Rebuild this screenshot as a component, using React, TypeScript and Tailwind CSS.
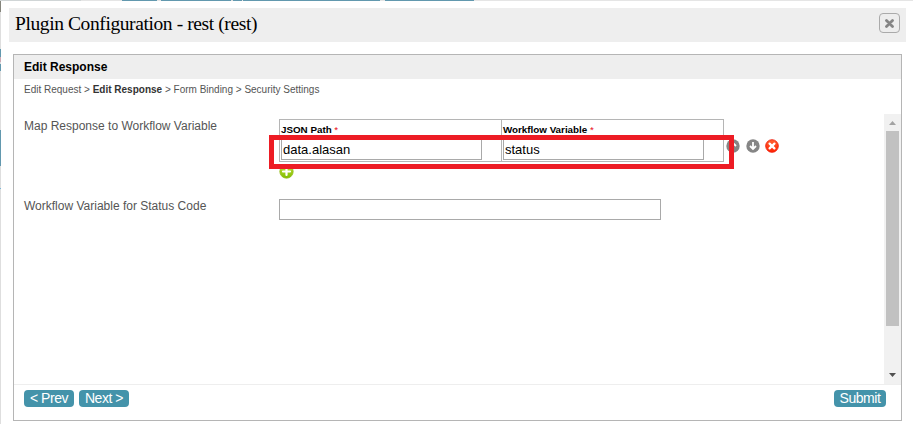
import React from "react";

const inputClass =
  "block h-[21px] border border-[#a9a9a9] bg-white px-px text-[13px] leading-[19px] text-black outline-none";

function GreyArrow({ up = false }: { up?: boolean }) {
  return (
    <svg width="14" height="14" viewBox="0 0 14 14" className="block">
      <circle cx="7" cy="7" r="6.7" fill="#858585" />
      <path
        d="M7 3v7M4 7l3 3 3-3"
        fill="none"
        stroke="#fff"
        strokeWidth="1.8"
        transform={up ? "rotate(180 7 7)" : undefined}
      />
    </svg>
  );
}

function DeleteIcon() {
  return (
    <svg width="14" height="14" viewBox="0 0 14 14" className="-ml-px block">
      <defs>
        <linearGradient id="del" x1="0" y1="0" x2="0" y2="1">
          <stop offset="0" stopColor="#ff6533" />
          <stop offset="1" stopColor="#ff2100" />
        </linearGradient>
      </defs>
      <circle cx="7" cy="7" r="6.3" fill="url(#del)" stroke="#ee2010" strokeWidth="0.9" />
      <path d="M4.6 4.6l4.8 4.8M9.4 4.6L4.6 9.4" stroke="#fff" strokeWidth="2.3" strokeLinecap="round" />
    </svg>
  );
}

function AddIcon() {
  return (
    <svg width="15" height="15" viewBox="0 0 15 15" className="block">
      <defs>
        <linearGradient id="add" x1="0" y1="0" x2="0" y2="1">
          <stop offset="0" stopColor="#c3e33a" />
          <stop offset="1" stopColor="#80bd00" />
        </linearGradient>
      </defs>
      <circle cx="7.5" cy="7.5" r="6.7" fill="url(#add)" stroke="#95bd20" strokeWidth="0.8" />
      <path d="M7.5 4v7M4 7.5h7" stroke="#fff" strokeWidth="2.2" strokeLinecap="round" />
    </svg>
  );
}

function TopStrip() {
  return (
    <div className="flex h-px bg-[#e5e5e5]">
      <div className="w-[81px] bg-[#d0d5d6]" />
      <div className="ml-[41px] w-[35px] bg-[#6298ae]" />
      <div className="ml-1 w-[70px] bg-[#6298ae]" />
      <div className="w-[9px] bg-[#dedede]" />
      <div className="-ml-[9px] w-[9px] translate-x-[2px] bg-[#6298ae]" />
      <div className="ml-[3px] w-[137px] bg-[#6298ae]" />
      <div className="ml-[5px] w-[89px] bg-[#6298ae]" />
    </div>
  );
}

function LeftStrip() {
  return (
    <div className="flex w-px shrink-0 flex-col bg-[#dedede]">
      <div className="h-[11px] bg-[#85857c]" />
      <div className="mt-[37px] h-2 bg-[#6298ae]" />
      <div className="h-[5px] bg-[#cda9b4]" />
      <div className="mt-[2px] h-[7px] bg-[#6298ae]" />
      <div className="mt-[59px] h-9 bg-[#6298ae]" />
      <div className="mt-[22px] h-px bg-[#79b7da]" />
    </div>
  );
}

const buttonClass =
  "h-[17px] rounded-[4px] bg-[#4493aa] text-center text-[14px] leading-[17px] tracking-[-0.45px] text-white";

export default function App() {
  return (
    <div className="flex h-[424px] w-[913px] flex-col overflow-hidden bg-white font-['Liberation_Sans',Arial,sans-serif]">
      <TopStrip />
      <div className="flex flex-1">
        <LeftStrip />
        <div className="flex flex-1 flex-col rounded-tl-[4px] bg-white pt-[7px]">
          <header className="ml-2 flex h-[34px] w-[897px] items-center justify-between bg-[#eee] pr-[6px] pl-[6px]">
            <h1 className="h-[34px] whitespace-nowrap font-['Liberation_Serif',serif] text-[19.5px] leading-[31px] tracking-[-0.4px] text-black">
              Plugin Configuration - rest (rest)
            </h1>
            <button className="mb-[4px] flex h-[20px] w-[21px] items-center justify-center rounded-[4px] border border-[#aaa] bg-[#ededed]">
              <svg width="9" height="9" viewBox="0 0 9 9">
                <path d="M1.5 1.5l6 6M7.5 1.5l-6 6" stroke="#858585" strokeWidth="2.8" strokeLinecap="round" />
              </svg>
            </button>
          </header>

          <main className="mt-[12px] ml-[12px] flex h-[367px] w-[889px] flex-col border border-[#b5b5b5]">
            <h2 className="h-[24px] bg-[#eee] pl-[10px] text-[12px] leading-[24px] font-bold text-black">
              Edit Response
            </h2>
            <nav className="h-[35px] pt-[4px] pl-[10px] text-[10px] leading-[14px] whitespace-pre text-[#555]">
              Edit Request &gt; <b className="text-[#333]">Edit Response</b> &gt; Form Binding &gt; Security Settings
            </nav>

            <div className="flex h-[271px] border-b border-[#eee]">
              <div className="flex-1 pl-[10px]">
                <section className="flex h-[85px] pt-[5px]">
                  <label className="w-[255px] shrink-0 text-[12px] leading-[14px] text-[#555]">
                    Map Response to Workflow Variable
                  </label>
                  <div>
                    <div className="flex">
                      <div className="relative">
                        <table className="w-[445px] table-fixed border-collapse">
                          <thead>
                            <tr className="h-[19px] text-left text-[9.8px] leading-[11px] text-black">
                              <th className="w-[222px] border border-b-0 border-[#b5b5b5] p-0 pt-px pl-px">
                                JSON Path <span className="font-normal text-red-600">*</span>
                              </th>
                              <th className="border border-b-0 border-[#b5b5b5] p-0 pt-px pl-px">
                                Workflow Variable <span className="font-normal text-red-600">*</span>
                              </th>
                            </tr>
                          </thead>
                          <tbody>
                            <tr className="h-[23px]">
                              <td className="border border-t-0 border-[#b5b5b5] p-0 pl-px">
                                <input className={`${inputClass} w-[201px]`} defaultValue="data.alasan" />
                              </td>
                              <td className="border border-t-0 border-[#b5b5b5] p-0 pl-px">
                                <input className={`${inputClass} w-[201px]`} defaultValue="status" />
                              </td>
                            </tr>
                          </tbody>
                        </table>
                        <div className="pointer-events-none absolute top-[16px] left-[-10px] z-10 h-[34px] w-[465px] border-5 border-[#ed1c24]" />
                      </div>
                      <div className="flex gap-[6px] pt-[20px] pl-[2px]">
                        <GreyArrow up />
                        <GreyArrow />
                        <DeleteIcon />
                      </div>
                    </div>
                    <div className="pt-[2px]">
                      <AddIcon />
                    </div>
                  </div>
                </section>
                <section className="flex">
                  <label className="w-[255px] shrink-0 text-[12px] leading-[14px] text-[#555]">
                    Workflow Variable for Status Code
                  </label>
                  <input className={`${inputClass} w-[382px]`} />
                </section>
              </div>
              <div className="flex w-[17px] flex-col items-center bg-[#f1f1f1]">
                <svg width="7" height="4" viewBox="0 0 7 4" className="mt-[7px]">
                  <path d="M0 4L3.5 0L7 4Z" fill="#a3a3a3" />
                </svg>
                <div className="mt-[6px] h-[195px] w-[13px] bg-[#c1c1c1]" />
                <svg width="7" height="4" viewBox="0 0 7 4" className="mt-[47px]">
                  <path d="M0 0L3.5 4L7 0Z" fill="#505050" />
                </svg>
              </div>
            </div>

            <footer className="flex gap-[5px] pt-[5px] pr-[15px] pl-[10px]">
              <button className={`${buttonClass} w-[50px]`}>&lt; Prev</button>
              <button className={`${buttonClass} w-[50px]`}>Next &gt;</button>
              <button className={`${buttonClass} ml-auto w-[52px]`}>Submit</button>
            </footer>
          </main>
        </div>
      </div>
    </div>
  );
}
